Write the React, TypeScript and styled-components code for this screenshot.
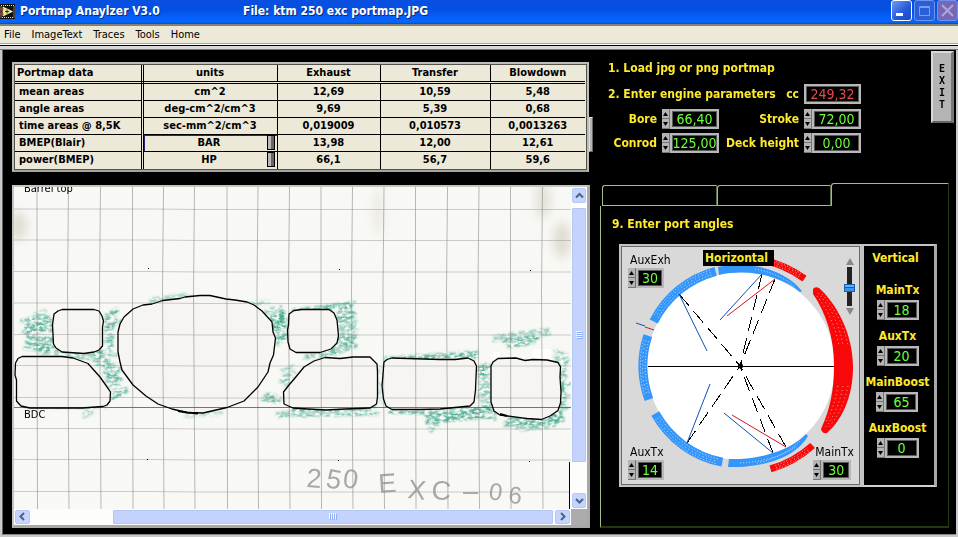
import React, { useState } from "react";
import styled, { createGlobalStyle, css } from "styled-components";

const ui = `"DejaVu Sans Condensed", "DejaVu Sans", sans-serif`;
const yellow = "#ffe92b";
const face = "#ece9d8";

const GlobalStyle = createGlobalStyle`
  * { box-sizing: border-box; }
  body { margin: 0; background: #000; font-family: ${ui}; }
  button, input, select { font: inherit; margin: 0; padding: 0; border: 0; border-radius: 0; }
`;

const Window = styled.div`
  min-height: 100vh;
  display: flex;
  flex-direction: column;
  background: #000;
`;

/* ---------- title and menu ---------- */

const TitleBar = styled.header`
  display: flex;
  align-items: center;
  height: 24px;
  padding-bottom: 2px;
  color: #fff;
  background: linear-gradient(#0a4fe0 0, #0350e2 40%, #0560fb 75%, #0566ff 92%, #0348c8 100%);
`;

const TitleText = styled.h1`
  margin: 0 0 0 5px;
  flex: 0 0 223px;
  font: bold 12px/16px ${ui};
  text-shadow: 1px 1px 0 #0a2a80;
  white-space: nowrap;
`;

const FileText = styled.span`
  flex: 1;
  font: bold 12px/16px ${ui};
  text-shadow: 1px 1px 0 #0a2a80;
  white-space: nowrap;
`;

const WindowButtons = styled.div`
  display: flex;
  gap: 2px;
  height: 21px;
  align-self: flex-start;
  overflow: hidden;
`;

const WindowButton = styled.button<{ $tone: "live" | "dim" | "close" }>`
  width: 21px;
  height: 21px;
  border: 1px solid ${(p) => (p.$tone === "live" ? "#fff" : "#6f93ea")};
  border-radius: 3px;
  background: ${(p) =>
    p.$tone === "close"
      ? "#7668b8"
      : p.$tone === "dim"
        ? "#2a5fdc"
        : "linear-gradient(135deg, #6c9af4, #2257d8 60%, #1c4cc4)"};
  svg { display: block; }
`;

const MenuBar = styled.nav`
  display: flex;
  align-items: center;
  gap: 11px;
  height: 20px;
  padding: 1px 4px 0;
  background: ${face};
  border-top: 2px solid #85826f;
  border-bottom: 1px solid #aca899;
`;

const MenuItem = styled.button`
  background: none;
  color: #000;
  font-size: 11px;
  line-height: 16px;
`;

const Frame = styled.div`
  flex: 1;
  display: flex;
  flex-direction: column;
  border-top: 1px solid #fff;
  background: #c9c9c9;
  padding: 0 2px 2px;
  &::before {
    content: "";
    height: 3px;
    margin: 0 -2px;
    border-top: 1px solid #000;
    border-bottom: 1px solid #777;
    background: #d8d8d8;
  }
`;

const Main = styled.main`
  flex: 1;
  display: grid;
  grid-template-columns: minmax(0, 581fr) minmax(0, 354fr);
  column-gap: 7px;
  padding: 0 2px 6px 9px;
  background: #000;
  border-left: 1px solid #666;
  border-bottom: 1px solid #888;
`;

/* ---------- table ---------- */

const LeftColumn = styled.section`
  display: flex;
  flex-direction: column;
  gap: 13px;
  padding-top: 12px;
`;

const TableRow = styled.div`
  display: flex;
`;

const TableFrame = styled.div`
  flex: 1;
  border: 2px solid #bcbcb8;
  border-right-width: 3px;
  border-bottom-color: #a4a4a0;
  outline: 1px solid #55534c;
  outline-offset: -3px;
  padding: 1px;
  background: ${face};
`;

const Table = styled.table`
  width: 100%;
  table-layout: fixed;
  border-collapse: collapse;
  color: #000;
  font: bold 11px/16px ${ui};
  text-align: center;
  th, td { padding: 0; height: 17px; border: 1px solid #000; white-space: nowrap; }
  tr > :first-child { text-align: left; padding-left: 4px; border-right: 3px double #000; border-left: 0; }
  thead th { font-size: 11px; border-top: 0; border-bottom: 3px double #000; }
  thead tr > :first-child { padding-left: 2px; }
  tr > :last-child { border-right: 0; }
  tbody tr:last-child > * { border-bottom: 0; }
`;

const Col = styled.col<{ $w: number }>`
  width: ${(p) => p.$w}px;
`;

const UnitCell = styled.div<{ $focus?: boolean }>`
  display: grid;
  grid-template-columns: minmax(0, 1fr) 8px;
  padding: 0 2px 0 8px;
  height: 16px;
  ${(p) => p.$focus && css`box-shadow: inset 1px 1px 0 #2a2a70;`}
`;

const UnitSelect = styled.select`
  appearance: none;
  width: 100%;
  height: 16px;
  background: transparent;
  color: #000;
  text-align: center;
  text-align-last: center;
`;

const Notch = styled.span`
  height: 15px;
  border: 1px solid #000;
  background: linear-gradient(90deg, #b8b8b8 0 3px, #666 3px 100%);
`;

const SideHandle = styled.span`
  width: 5px;
  height: 35px;
  align-self: flex-end;
  margin-bottom: 20px;
  background: #b4b4b4;
  border: 1px solid #e0e0e0;
  border-right-color: #666;
  border-bottom-color: #666;
`;

/* ---------- port map viewer ---------- */

const Viewer = styled.div`
  display: grid;
  grid-template-columns: minmax(0, 1fr) 16px;
  grid-template-rows: auto 16px;
  margin-right: 3px;
  border: 2px solid #c4c4c0;
  border-right: 3px solid #a8a8a8;
  border-bottom: 3px solid #a8a8a8;
  background: #fff;
`;

const Paper = styled.svg`
  display: block;
  width: 100%;
  height: auto;
`;

const ScrollBar = styled.div<{ $vertical?: boolean }>`
  display: flex;
  flex-direction: ${(p) => (p.$vertical ? "column" : "row")};
  padding: 1px;
  background: #fdfdfb;
`;

const ScrollButton = styled.button`
  display: grid;
  place-items: center;
  flex: 0 0 15px;
  min-width: 14px;
  border: 1px solid #b4c8f6;
  border-radius: 2px;
  background: #c6d5fd;
`;

const Track = styled.div<{ $grow: number }>`
  flex: ${(p) => p.$grow} 1 0;
`;

const Thumb = styled.div<{ $grow: number }>`
  flex: ${(p) => p.$grow} 1 0;
  display: grid;
  place-items: center;
  border: 1px solid #b4c6f4;
  border-radius: 1px;
  background: #c4d3fd;
`;

const Corner = styled.div`
  background: #acacac;
`;

/* ---------- engine parameters ---------- */

const RightColumn = styled.section`
  display: flex;
  flex-direction: column;
`;

const TopArea = styled.div`
  display: flex;
  justify-content: space-between;
  padding: 1px 0 30px 8px;
`;

const Params = styled.div`
  width: 253px;
  padding-top: 9px;
`;

const Heading = styled.h2`
  margin: 0;
  color: ${yellow};
  font: bold 12px/16px ${ui};
  white-space: nowrap;
`;

const EngineRow = styled.div`
  display: flex;
  align-items: center;
  margin: 8px 0 5px;
`;

const ParamGrid = styled.div`
  display: grid;
  grid-template-columns: 49px 57px 75px 57px;
  gap: 4px 5px;
  align-items: center;
`;

const FieldLabel = styled.label<{ $auto?: boolean }>`
  color: ${yellow};
  font: bold 12px/16px ${ui};
  text-align: right;
  white-space: nowrap;
  ${(p) => p.$auto && css`margin: 0 5px 0 auto;`}
`;

const SpinBox = styled.span<{ $w: number }>`
  display: flex;
  width: ${(p) => p.$w}px;
  height: 20px;
`;

const Steppers = styled.span`
  flex: 0 0 8px;
  display: grid;
  grid-template-rows: 1fr 1fr;
  background: #b4b4b4;
`;

const Step = styled.button`
  display: grid;
  place-items: center;
  background: #b4b4b4;
  border-right: 1px solid #777;
  border-bottom: 1px solid #777;
  svg { display: block; }
`;

const valueBox = css`
  min-width: 0;
  height: 20px;
  border: 2px solid #b8b8b8;
  outline: 1px solid #5a5a5a;
  outline-offset: -3px;
  background: #000;
  text-align: center;
  font-size: 14px;
  line-height: 16px;
`;

const ValueInput = styled.input`
  ${valueBox}
  flex: 1;
  width: 100%;
  color: #6cff3c;
`;

const Readout = styled.output`
  ${valueBox}
  width: 57px;
  color: #e8484c;
`;

const ExitButton = styled.button`
  width: 23px;
  height: 72px;
  border: 2px solid #d8d8d8;
  border-right: 3px solid #777;
  border-bottom: 2px solid #666;
  background: #b4b4b4;
  color: #000;
  font: bold 10px/12px "DejaVu Sans Mono", monospace;
  white-space: pre-line;
`;

/* ---------- tabs and angles ---------- */

const Tabs = styled.div`
  display: flex;
  align-items: flex-end;
  height: 23px;
  margin-right: 5px;
  padding-left: 2px;
`;

const Tab = styled.button<{ $grow: number; $active?: boolean }>`
  flex: ${(p) => p.$grow} 1 0;
  height: ${(p) => (p.$active ? 23 : 21)}px;
  background: #000;
  border: 1px solid #a4bc8c;
  border-right-color: ${(p) => (p.$active ? "#24380f" : "#5c7048")};
  border-bottom: ${(p) => (p.$active ? "0" : "1px solid #a4bc8c")};
  border-radius: 3px 0 0 0;
`;

const TabPanel = styled.div`
  flex: 1;
  margin-right: 5px;
  padding: 10px 11px 38px;
  border-left: 1px solid #a4bc8c;
  border-right: 1px solid #24380f;
  border-bottom: 2px solid #24380f;
`;

const AngleBox = styled.div`
  display: grid;
  grid-template-columns: minmax(0, 243fr) minmax(0, 75fr);
  margin: 12px 0 0 7px;
`;

const Dial = styled.div`
  display: grid;
  border: 2px solid #c4c4c4;
  outline: 1px solid #6a6a6a;
  outline-offset: -3px;
  background: #d9d9d9;
  > * { grid-area: 1 / 1; }
`;

const DialSvg = styled.svg`
  display: block;
  width: 100%;
  height: auto;
`;

const DialCorner = styled.div<{ $x: "start" | "end"; $y: "start" | "end" }>`
  z-index: 1;
  display: flex;
  flex-direction: column;
  justify-self: ${(p) => p.$x};
  align-self: ${(p) => p.$y};
  padding: 6px 6px 5px 7px;
`;

const DialLabel = styled.label`
  padding-left: 2px;
  color: #000;
  font-size: 12px;
  line-height: 16px;
`;

const HorizontalTag = styled.h3`
  z-index: 1;
  justify-self: center;
  align-self: start;
  margin: 4px 4px 0 0;
  padding: 0 6px 0 2px;
  background: #000;
  color: ${yellow};
  font: bold 12px/16px ${ui};
`;

const ZoomControl = styled.div`
  z-index: 1;
  justify-self: end;
  align-self: start;
  display: grid;
  justify-items: center;
  gap: 2px;
  margin: 12px 5px 0 0;
`;

const ArrowButton = styled.button`
  background: none;
  svg { display: block; }
`;

const VerticalRange = styled.input`
  appearance: none;
  writing-mode: vertical-lr;
  direction: rtl;
  width: 11px;
  height: 39px;
  background: linear-gradient(90deg, transparent 3px, #222 3px 8px, transparent 8px);
  &::-webkit-slider-thumb {
    appearance: none;
    width: 11px;
    height: 8px;
    border: 1px solid #1c5ca8;
    background: linear-gradient(#5cb0ff 0 2px, #1c5ca8 2px 3px, #3a94f0 3px 100%);
  }
`;

const VerticalPanel = styled.div`
  display: flex;
  flex-direction: column;
  align-items: center;
  padding: 4px 3px 4px 0;
  background: #000;
  border: 2px solid #c4c4c4;
  border-right: 3px solid #a8a8a8;
  border-bottom-color: #d0d0d0;
`;

const VerticalTitle = styled.h3`
  margin: 0 4px 16px 0;
  color: ${yellow};
  font: bold 12px/16px ${ui};
`;

const VerticalField = styled.div`
  display: grid;
  justify-items: center;
  gap: 2px;
  height: 46px;
  align-content: start;
`;

function Spinner({ id, value, width, label }: { id: string; value: string; width: number; label?: string }) {
  const [text, setText] = useState(value);
  const bump = (by: number) => {
    const decimals = (text.split(",")[1] || "").length;
    const next = parseFloat(text.replace(",", ".")) + by;
    if (!Number.isNaN(next)) setText(next.toFixed(decimals).replace(".", ","));
  };
  return (
    <SpinBox $w={width}>
      <Steppers>
        <Step aria-label={`Increase ${label ?? id}`} onClick={() => bump(1)}>
          <svg width="5" height="4"><path d="M2.5 0L5 4H0Z" /></svg>
        </Step>
        <Step aria-label={`Decrease ${label ?? id}`} onClick={() => bump(-1)}>
          <svg width="5" height="4"><path d="M0 0H5L2.5 4Z" /></svg>
        </Step>
      </Steppers>
      <ValueInput id={id} value={text} onChange={(e) => setText(e.target.value)} />
    </SpinBox>
  );
}

const rows = [
  ["mean areas", "cm^2", "12,69", "10,59", "5,48"],
  ["angle areas", "deg-cm^2/cm^3", "9,69", "5,39", "0,68"],
  ["time areas @ 8,5K", "sec-mm^2/cm^3", "0,019009", "0,010573", "0,0013263"],
  ["BMEP(Blair)", "BAR", "13,98", "12,00", "12,61"],
  ["power(BMEP)", "HP", "66,1", "56,7", "59,6"],
];

function DataTable() {
  return (
    <TableFrame>
      <Table>
        <colgroup>
          <Col $w={127} /><Col $w={135} /><Col $w={103} /><Col $w={110} /><Col $w={95} />
        </colgroup>
        <thead>
          <tr>{["Portmap data", "units", "Exhaust", "Transfer", "Blowdown"].map((h) => <th key={h} scope="col">{h}</th>)}</tr>
        </thead>
        <tbody>
          {rows.map(([name, unit, ...values]) => (
            <tr key={name}>
              <th scope="row">{name}</th>
              <td>
                {unit === "BAR" || unit === "HP" ? (
                  <UnitCell $focus={unit === "BAR"}>
                    <UnitSelect aria-label={`${name} unit`}><option>{unit}</option></UnitSelect>
                    <Notch />
                  </UnitCell>
                ) : unit}
              </td>
              {values.map((v) => <td key={v}>{v}</td>)}
            </tr>
          ))}
        </tbody>
      </Table>
    </TableFrame>
  );
}

/* Crayon shading: x, y, width, height, slope, opacity */
const shading: [number, number, number, number, number, number][] = [
  [26, 312, 28, 10, -4, 0.35], [18, 319, 38, 12, -3, 0.6], [22, 336, 34, 12, 3, 0.6], [34, 346, 30, 8, 3, 0.5],
  [60, 350, 44, 6, 3, 0.45],
  [101, 312, 22, 14, -8, 0.6], [101, 326, 17, 22, -6, 0.55], [92, 350, 26, 16, 3, 0.45], [100, 366, 24, 12, 3, 0.6],
  [104, 378, 20, 10, 2, 0.45], [108, 390, 22, 8, -5, 0.55], [148, 295, 46, 5, -5, 0.35], [240, 301, 34, 4, -2, 0.35],
  [264, 314, 26, 12, -9, 0.7], [273, 324, 16, 20, -5, 0.6], [262, 308, 28, 8, -5, 0.35], [278, 366, 20, 18, -3, 0.45],
  [258, 394, 28, 6, 3, 0.6], [274, 412, 26, 3, -3, 0.5], [288, 306, 68, 3, -8, 0.6], [332, 306, 24, 12, -6, 0.6],
  [334, 322, 24, 12, -5, 0.45], [330, 336, 30, 12, -9, 0.6], [300, 352, 40, 5, -5, 0.45],
  [376, 356, 106, 3, -3, 0.45], [400, 353, 80, 4, -5, 0.5], [474, 364, 20, 10, -3, 0.7], [474, 374, 20, 34, -4, 0.45],
  [492, 333, 64, 3, -7, 0.45], [502, 337, 38, 6, -4, 0.65], [548, 350, 22, 12, 4, 0.4], [556, 364, 15, 26, -5, 0.6],
  [556, 390, 15, 20, -4, 0.55], [18, 405, 92, 2, 1, 0.45], [76, 410, 24, 4, -5, 0.35], [290, 407, 90, 6, -2, 0.55],
  [376, 366, 8, 38, -2, 0.35], [386, 408, 100, 5, 2, 0.65], [424, 412, 66, 8, -6, 0.65], [426, 424, 18, 4, -8, 0.45],
  [482, 404, 20, 12, 3, 0.6], [500, 417, 62, 7, -3, 0.65], [514, 424, 44, 5, -4, 0.45], [546, 412, 22, 10, -5, 0.6],
  [180, 412, 46, 3, -3, 0.25],
];

function hatch([x, y, w, h, slope]: number[], seed: number) {
  let s = seed * 7919 + 13;
  const rnd = () => ((s = (s * 1103515245 + 12345) % 2147483648) / 2147483648);
  let d = "";
  for (let v = 0; v <= h; v += 3) {
    const a = rnd() * 8;
    const b = w - rnd() * 8;
    const lift = rnd() * 2;
    d += `M${(x + a).toFixed(1)} ${(y + v - slope / 2 + lift).toFixed(1)}L${(x + b).toFixed(1)} ${(y + v + slope / 2 + lift).toFixed(1)}`;
  }
  return d;
}

const columns = [37, 68.5, 100.5, 132.5, 163.5, 194.5, 227, 258, 289.5, 321, 352.5, 384, 415.5, 447.5, 479, 510.5, 542.5];
const lines = [209, 240, 271.5, 303, 334.5, 365.5, 397.5, 428.5, 459.5, 491.5];

const ports = [
  "M62 309.5H94L99 311L102 316L103.500 321L102.500 327V346L99 350L94 352L84 353.500L62 352L56 348L53.500 344L52.500 325L54 314L58 311Z",
  "M200 295.500L185 297L180 298.500L163 300.500L152 304L143 305L133 309L124 317L120 324L118 332V352L120 362L122 370L133 385L146 396L158 404L172 409L187 412.500L203 413L227 407.500L244 401L258 387L268 372L270 363L273.500 355L275.500 338L273 332L272 322L262 311L254 305L247 302L235 300L226 299L210 295.500Z",
  "M289 314L294 310.500L302 309.500H329L334 313L337 320L338.500 336L337 343L331 349L320 352.500H296L290 349L288 342L287.500 330L288.500 325Z",
  "M15.500 363L18 358.500L22 356.500H62L73 358L88 363.500L100 377L105 384L110.500 392L110 401L107 405L103 406.500L82 408H30L21 406L16.500 401V380L15 375Z",
  "M283.500 392L289 385L295 378L304 367L314 361L325 357.500L340 358.500L353 357H370L377 364L377.500 372V397L376.500 404L370 408L345 409L326 410L308 409L293 408L284 404Z",
  "M384 362L387 359.500L392 358L440 359.500H455L468 358L474 361L476.500 366L475.500 390L474 402L470 406L440 409L420 409.500H392L386 406L383.500 399L382 386Z",
  "M493 362L498 358.500L516 358L525 360.500L533 359.500L547 360L558 362.500L560.500 367L560 377L561 392L560.500 403L558 410.500L550 416L541.500 419.500L527 418.500L500 415L494 411L491 402V366Z",
];

function PortMap() {
  return (
    <Paper viewBox="14 187 557 322" role="img" aria-label="Scanned port map">
      <defs>
        <filter id="crayon" x="-5%" y="-20%" width="110%" height="140%">
          <feTurbulence type="fractalNoise" baseFrequency="0.2 0.35" numOctaves="4" seed="4" result="n" />
          <feColorMatrix in="n" values="0 0 0 0 0  0 0 0 0 0  0 0 0 0 0  0 0 0 3.2 -1" result="m" />
          <feGaussianBlur in="SourceGraphic" stdDeviation="1.1" result="soft" />
          <feComposite in="soft" in2="m" operator="in" />
        </filter>
        <filter id="stain" x="-50%" y="-50%" width="200%" height="200%">
          <feGaussianBlur stdDeviation="5" />
        </filter>
      </defs>
      <rect x="14" y="187" width="557" height="322" fill="#f8f8f5" />
      <g fill="#b4ac90" filter="url(#stain)">
        <ellipse cx="18" cy="226" rx="9" ry="14" opacity="0.35" />
        <ellipse cx="378" cy="212" rx="6" ry="24" opacity="0.14" />
        <ellipse cx="543" cy="200" rx="8" ry="18" opacity="0.28" />
        <ellipse cx="562" cy="240" rx="9" ry="18" opacity="0.35" />
      </g>
      <g stroke="#48ac90" strokeWidth="3" fill="none" filter="url(#crayon)">
        {shading.map((s, i) => <path key={i} d={hatch(s, i + 1)} opacity={Math.min(1, s[5] * 1.4)} />)}
      </g>
      <g fill="#f6f5f2">
        {ports.map((d) => <path key={d} d={d} />)}
        <path d="M533 349H551V358H533ZM493 352H500V358H493Z" fill="#fff" />
      </g>
      <g stroke="#777" strokeOpacity="0.5" fill="none">
        {columns.map((x, i) => <path key={x} d={`M${x} 187L${x - (i % 3 ? 1 : 0)} 290L${x + 0.5} 509`} />)}
      </g>
      <g stroke="#888" strokeOpacity="0.4" fill="none">
        {lines.map((y) => <path key={y} d={`M14 ${y}H150L200 ${y + 0.5}H571`} />)}
      </g>
      <path d="M14 407.500H571" stroke="#555" strokeOpacity="0.8" />
      <g stroke="#000" strokeWidth="1.300" fill="none" strokeLinejoin="round">
        {ports.map((d) => <path key={d} d={d} />)}
      </g>
      <path d="M178 411L187 412.500L198 413.500M500 414L507 416" stroke="#000" strokeWidth="2" />
      <g fill="#000">
        {[[148, 268], [339, 269], [530, 270], [147, 459], [338, 460], [529, 461]].map(([x, y]) => (
          <rect key={`${x}-${y}`} x={x} y={y} width="1" height="1" />
        ))}
      </g>
      <path d="M569.500 462V509" stroke="#000" />
      <rect x="570" y="462" width="1" height="47" fill="#fff" />
      <g fontFamily={ui} fontSize="11" fill="#000">
        <text x="24" y="192">Barrel top</text>
        <text x="24" y="418">BDC</text>
      </g>
      <g fontFamily='"Liberation Sans", sans-serif' fontSize="27" fill="#8e8e8c" fillOpacity="0.75">
        <text x="306 325 342" y="487 487 487" rotate="4 10 8">250</text>
        <text x="379 407 431" y="493 498 499" rotate="-4 6 4">EXC</text>
        <text x="463" y="500">–</text>
        <text x="488 508" y="499 503" rotate="8 4" fontSize="24">06</text>
      </g>
    </Paper>
  );
}

const cx = 741;
const cy = 366;
const at = (deg: number, r: number) => {
  const a = (deg * Math.PI) / 180;
  return `${(cx + r * Math.cos(a)).toFixed(1)} ${(cy - r * Math.sin(a)).toFixed(1)}`;
};
const arc = (from: number, to: number, r: number) => `M${at(from, r)}A${r} ${r} 0 0 0 ${at(to, r)}`;

function Sector({ from, to, r, thick, color }: { from: number; to: number; r: number; thick: number; color: string }) {
  return (
    <g fill="none">
      <path d={arc(from, to, r)} stroke={color} strokeWidth={thick} />
      {[-0.25, 0.05, 0.3].map((k, i) => (
        <path key={k} d={arc(from + 3, to - 3, r + k * thick)} stroke="#fff" strokeOpacity="0.9" strokeWidth="0.800" strokeDasharray={i % 2 ? "1 3" : "1 2"} />
      ))}
    </g>
  );
}

const crescent = "M813 289Q815 286 819 288C836 303 853 333 853 367C853 398 841 421 827 433Q822 434 821 429C830 410 834 390 834 366C834 337 826 313 813 294Z";

function PortDial() {
  return (
    <DialSvg viewBox="621 246 239 239" role="img" aria-label="Horizontal port angles">
      <circle cx={cx} cy={cy} r="94" fill="#fff" />
      <Sector from={105} to={153} r={98} thick={9} color="#3496fa" />
      <Sector from={162} to={200} r={98} thick={9} color="#3496fa" />
      <Sector from={209} to={259} r={98} thick={9} color="#3496fa" />
      <path d="M718 267C748 260 785 269 802 291L800 292C782 277 750 268 719 275Z" fill="#3496fa" />
      <path d="M728 467C760 468 795 459 808 436L806 434C790 451 758 460 729 459Z" fill="#3496fa" />
      <g fill="none" stroke="#fff" strokeOpacity="0.9" strokeWidth="0.800" strokeDasharray="1 2">
        <path d="M755 269Q778 273 794 286M764 268Q776 270 786 276M740 463Q775 461 797 446M757 463Q785 457 801 440" />
      </g>
      <Sector from={54} to={78} r={108} thick={7} color="#f80808" />
      <Sector from={286} to={312} r={107} thick={7} color="#f80808" />
      <path d={crescent} fill="#f80808" />
      <g fill="none" stroke="#fff" strokeOpacity="0.8" strokeWidth="0.800" strokeDasharray="1 3">
        <path d="M818 293Q838 315 843 346M817 296Q834 318 839 346M822 294Q843 318 848 346M843 386Q838 412 825 428M848 386Q843 410 829 427M838 386Q834 408 826 422" />
      </g>
      <path d="M648 366.500H834" stroke="#000" />
      <g stroke="#000" strokeDasharray="15 7" shapeRendering="crispEdges">
        <path d="M762 274L740 366M775 279L740 366M679 294L740 366M687 443L740 366M773 453L740 366M786 447L740 366" />
      </g>
      <circle cx="740.500" cy="366" r="2.500" fill="#000" />
      <path d="M762 274L720 320M679 294L707 351M687 443L710 384M773 453L724 413M636 323L645 326" stroke="#1450b4" />
      <path d="M775 279L727 316M786 447L732 415M645 327L654 330" stroke="#dc1420" />
    </DialSvg>
  );
}

const Chevron = ({ d }: { d: string }) => (
  <svg width="9" height="9" viewBox="0 0 9 9" fill="none" stroke="#4d6185" strokeWidth="2"><path d={d} /></svg>
);

const verticalFields = [["MainTx", "18"], ["AuxTx", "20"], ["MainBoost", "65"], ["AuxBoost", "0"]];

export default function App() {
  return (
    <Window>
      <GlobalStyle />
      <TitleBar>
        <svg width="15" height="17" viewBox="0 0 15 17">
          <path d="M0 1H15V16H0Z" fill="#111" />
          <path d="M1 2.500H14V14.500H1Z" fill="none" stroke="#e8e0a0" strokeDasharray="1 1" />
          <path d="M3 4L12.500 8.500L3 13Z" fill="#f4ee80" stroke="#fff" strokeWidth="0.600" />
          <path d="M0 6H4M0 11H4" stroke="#e04020" />
          <path d="M5 8.500H9M7 6.500V10.500" stroke="#222" />
        </svg>
        <TitleText>Portmap Anaylzer V3.0</TitleText>
        <FileText>File: ktm 250 exc portmap.JPG</FileText>
        <WindowButtons>
          <WindowButton $tone="live" aria-label="Minimize">
            <svg width="19" height="19"><path d="M4 12H11V15H4Z" fill="#fff" /></svg>
          </WindowButton>
          <WindowButton $tone="dim" aria-label="Maximize">
            <svg width="19" height="19"><path d="M4.500 5.500H14.500V14.500H4.500ZM4 6.500H15" fill="none" stroke="#7d9df0" /></svg>
          </WindowButton>
          <WindowButton $tone="close" aria-label="Close">
            <svg width="19" height="19"><path d="M4 4L15 15M15 4L4 15" stroke="#b0a4d8" strokeWidth="2" /></svg>
          </WindowButton>
        </WindowButtons>
      </TitleBar>
      <MenuBar>
        {["File", "ImageText", "Traces", "Tools", "Home"].map((m) => <MenuItem key={m}>{m}</MenuItem>)}
      </MenuBar>
      <Frame>
        <Main>
          <LeftColumn>
            <TableRow>
              <DataTable />
              <SideHandle />
            </TableRow>
            <Viewer>
              <PortMap />
              <ScrollBar $vertical>
                <ScrollButton aria-label="Scroll up"><Chevron d="M1 6.500L4.500 3L8 6.500" /></ScrollButton>
                <Track $grow={6} />
                <Thumb $grow={252}>
                  <svg width="7" height="8"><path d="M0 .5H6M0 2.500H6M0 4.500H6M0 6.500H6" stroke="#eef4fe" /><path d="M1 1.500H7M1 3.500H7M1 5.500H7M1 7.500H7" stroke="#8cb0f8" /></svg>
                </Thumb>
                <Track $grow={31} />
                <ScrollButton aria-label="Scroll down"><Chevron d="M1 3L4.500 6.500L8 3" /></ScrollButton>
              </ScrollBar>
              <ScrollBar>
                <ScrollButton aria-label="Scroll left"><Chevron d="M6 1L2.500 4.500L6 8" /></ScrollButton>
                <Track $grow={83} />
                <Thumb $grow={439}>
                  <svg width="8" height="7"><path d="M.5 0V6M2.500 0V6M4.500 0V6M6.500 0V6" stroke="#eef4fe" /><path d="M1.500 1V7M3.500 1V7M5.500 1V7M7.500 1V7" stroke="#8cb0f8" /></svg>
                </Thumb>
                <Track $grow={2} />
                <ScrollButton aria-label="Scroll right"><Chevron d="M3 1L6.500 4.500L3 8" /></ScrollButton>
              </ScrollBar>
              <Corner />
            </Viewer>
          </LeftColumn>
          <RightColumn>
            <TopArea>
              <Params>
                <Heading>1. Load jpg or png portmap</Heading>
                <EngineRow>
                  <Heading>2. Enter engine parameters</Heading>
                  <FieldLabel $auto htmlFor="cc">cc</FieldLabel>
                  <Readout id="cc">249,32</Readout>
                </EngineRow>
                <ParamGrid>
                  <FieldLabel htmlFor="bore">Bore</FieldLabel>
                  <Spinner id="bore" value="66,40" width={57} />
                  <FieldLabel htmlFor="stroke">Stroke</FieldLabel>
                  <Spinner id="stroke" value="72,00" width={57} />
                  <FieldLabel htmlFor="conrod">Conrod</FieldLabel>
                  <Spinner id="conrod" value="125,00" width={57} />
                  <FieldLabel htmlFor="deck">Deck height</FieldLabel>
                  <Spinner id="deck" value="0,00" width={57} />
                </ParamGrid>
              </Params>
              <ExitButton aria-label="EXIT">{"E\nX\nI\nT"}</ExitButton>
            </TopArea>
            <Tabs role="tablist">
              <Tab role="tab" $grow={115} aria-label="Ports" />
              <Tab role="tab" $grow={114} aria-label="Trace" />
              <Tab role="tab" $grow={118} $active aria-selected aria-label="Angles" />
            </Tabs>
            <TabPanel role="tabpanel">
              <Heading>9. Enter port angles</Heading>
              <AngleBox>
                <Dial>
                  <PortDial />
                  <DialCorner $x="start" $y="start">
                    <DialLabel htmlFor="auxexh">AuxExh</DialLabel>
                    <Spinner id="auxexh" value="30" width={36} />
                  </DialCorner>
                  <HorizontalTag>Horizontal</HorizontalTag>
                  <ZoomControl>
                    <ArrowButton aria-label="More"><svg width="8" height="7"><path d="M4 0L8 7H0Z" fill="#888" /></svg></ArrowButton>
                    <VerticalRange type="range" defaultValue={46} aria-label="Rotation" />
                    <ArrowButton aria-label="Less"><svg width="8" height="7"><path d="M0 0H8L4 7Z" fill="#888" /></svg></ArrowButton>
                  </ZoomControl>
                  <DialCorner $x="start" $y="end">
                    <DialLabel htmlFor="auxtx">AuxTx</DialLabel>
                    <Spinner id="auxtx" value="14" width={36} />
                  </DialCorner>
                  <DialCorner $x="end" $y="end">
                    <DialLabel htmlFor="maintx">MainTx</DialLabel>
                    <Spinner id="maintx" value="30" width={38} />
                  </DialCorner>
                </Dial>
                <VerticalPanel>
                  <VerticalTitle>Vertical</VerticalTitle>
                  {verticalFields.map(([name, value]) => (
                    <VerticalField key={name}>
                      <FieldLabel htmlFor={`v-${name}`}>{name}</FieldLabel>
                      <Spinner id={`v-${name}`} value={value} width={42} label={name} />
                    </VerticalField>
                  ))}
                </VerticalPanel>
              </AngleBox>
            </TabPanel>
          </RightColumn>
        </Main>
      </Frame>
    </Window>
  );
}
